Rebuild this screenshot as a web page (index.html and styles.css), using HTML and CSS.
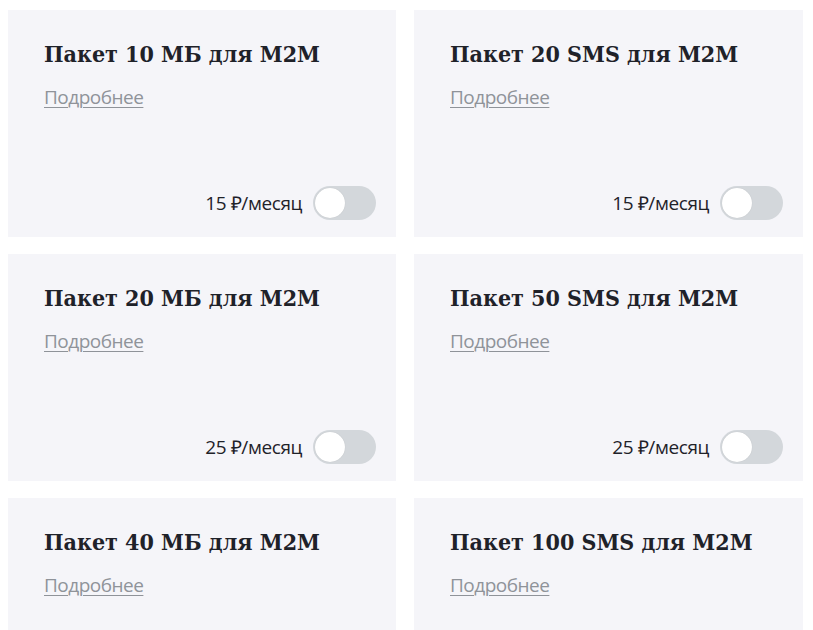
FILE: index.html
```html
<!DOCTYPE html>
<html lang="ru">
<head>
<meta charset="utf-8">
<link rel="stylesheet" href="styles.css">
</head>
<body>
<div class="grid">
  <div class="card">
    <h3 class="title">Пакет 10 МБ для M2M</h3>
    <a class="more" href="#">Подробнее</a>
    <div class="bottom"><span class="price">15 ₽/месяц</span><span class="toggle"><span class="knob"></span></span></div>
  </div>
  <div class="card">
    <h3 class="title">Пакет 20 SMS для M2M</h3>
    <a class="more" href="#">Подробнее</a>
    <div class="bottom"><span class="price">15 ₽/месяц</span><span class="toggle"><span class="knob"></span></span></div>
  </div>
  <div class="card">
    <h3 class="title">Пакет 20 МБ для M2M</h3>
    <a class="more" href="#">Подробнее</a>
    <div class="bottom"><span class="price">25 ₽/месяц</span><span class="toggle"><span class="knob"></span></span></div>
  </div>
  <div class="card">
    <h3 class="title">Пакет 50 SMS для M2M</h3>
    <a class="more" href="#">Подробнее</a>
    <div class="bottom"><span class="price">25 ₽/месяц</span><span class="toggle"><span class="knob"></span></span></div>
  </div>
  <div class="card">
    <h3 class="title">Пакет 40 МБ для M2M</h3>
    <a class="more" href="#">Подробнее</a>
  </div>
  <div class="card">
    <h3 class="title">Пакет 100 SMS для M2M</h3>
    <a class="more" href="#">Подробнее</a>
  </div>
</div>
</body>
</html>
```
FILE: styles.css
```css
html, body {
  margin: 0;
  padding: 0;
  background: #ffffff;
  overflow: hidden;
}
.grid {
  display: grid;
  grid-template-columns: 388px 389px;
  column-gap: 18px;
  row-gap: 17px;
  padding: 10px 0 0 8px;
}
.card {
  background: #f5f5f9;
  height: 227px;
  box-sizing: border-box;
  padding: 29px 20px 17px 36px;
  display: flex;
  flex-direction: column;
  align-items: flex-start;
}
.title {
  margin: 0;
  font-family: "DejaVu Serif Condensed", "DejaVu Serif", serif;
  font-weight: bold;
  font-size: 23px;
  line-height: 30px;
  white-space: nowrap;
  color: #1f2229;
}
.more {
  margin-top: 15px;
  font-family: "Open Sans", sans-serif;
  font-size: 19px;
  letter-spacing: -0.5px;
  line-height: 26px;
  color: #8f9399;
  text-decoration: underline;
  text-decoration-thickness: 1px;
  text-underline-offset: 3px;
}
.bottom {
  margin-top: auto;
  align-self: stretch;
  display: flex;
  justify-content: flex-end;
  align-items: center;
  gap: 11px;
}
.price {
  font-family: "Open Sans", sans-serif;
  font-size: 19px;
  letter-spacing: -0.4px;
  color: #1f2229;
}
.toggle {
  width: 63px;
  height: 34px;
  border-radius: 17px;
  background: #d3d7db;
  box-sizing: border-box;
  padding: 2px;
  display: flex;
  align-items: center;
}
.knob {
  width: 30px;
  height: 30px;
  border-radius: 50%;
  background: #ffffff;
  box-shadow: 0 0 1px rgba(0,0,0,0.15);
}
```
